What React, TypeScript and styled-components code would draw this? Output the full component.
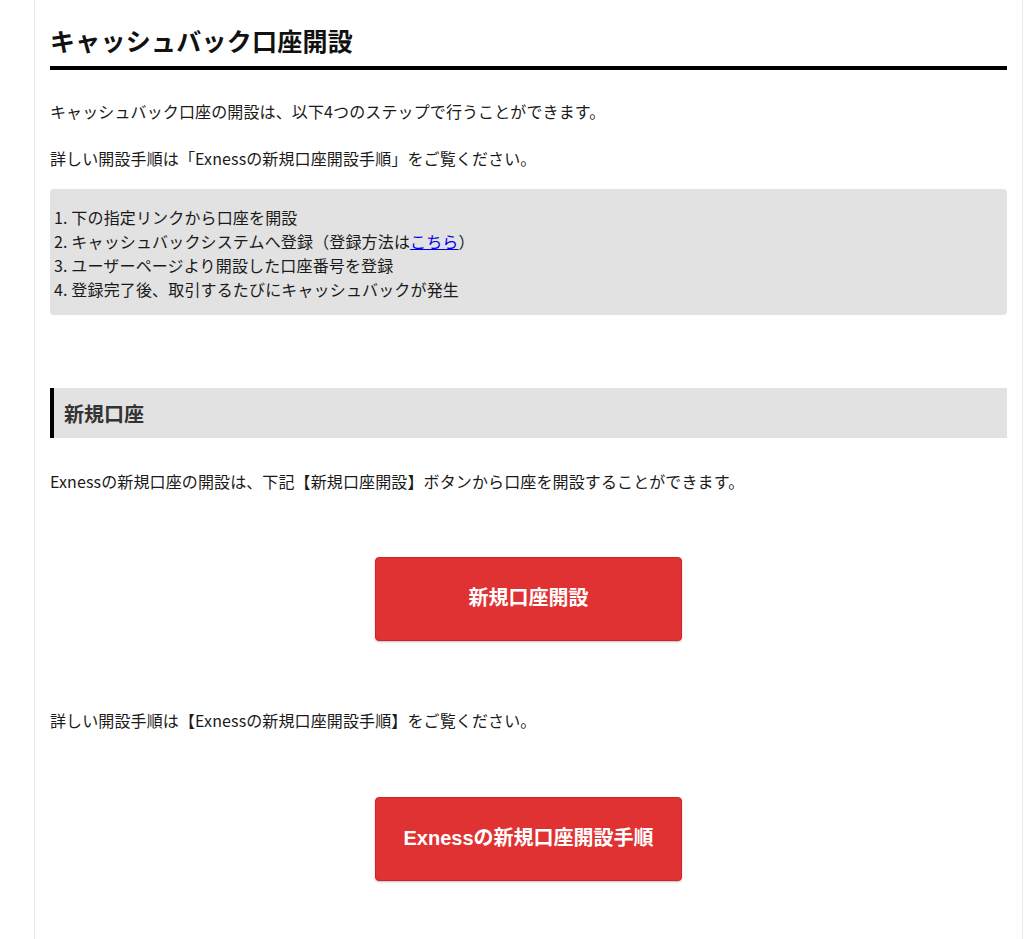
import React from 'react';
import styled, { createGlobalStyle } from 'styled-components';

const GlobalStyle = createGlobalStyle`
  body {
    margin: 0;
    background: #fff;
    font-family: "Noto Sans CJK JP", "Noto Sans", sans-serif;
    color: #1a1a1a;
  }
`;

// 記事本文のカード
const Article = styled.article`
  box-sizing: border-box;
  margin-left: 34px;
  width: 989px;
  min-height: 939px;
  padding: 22px 15px 40px;
  border-left: 1px solid #ebebeb;
  border-right: 1px solid #ebebeb;
`;

const Title = styled.h2`
  margin: 0;
  font-size: 25px;
  font-weight: 700;
  letter-spacing: 0.25px;
  line-height: 36px;
  padding-bottom: 8px;
  border-bottom: 4px solid #000;
  color: #111;
`;

const Para = styled.p<{ $top: number }>`
  margin: ${p => p.$top}px 0 0;
  font-size: 16px;
  letter-spacing: 0.12px;
  line-height: 28px;
`;

const StepBox = styled.div`
  margin-top: 17px;
  padding: 16px 3px 14px 4px;
  background: #e2e2e2;
  border-radius: 4px;
  font-size: 16px;
  letter-spacing: 0.15px;
  line-height: 24px;

  a {
    color: #0000ee;
    text-decoration: underline;
  }
`;

const SubHeading = styled.h3`
  margin: 73px 0 0;
  height: 50px;
  display: flex;
  align-items: center;
  padding-left: 10px;
  background: #e2e2e2;
  border-left: 4px solid #000;
  font-size: 20px;
  font-weight: 700;
  color: #333;
`;

const ButtonRow = styled.div<{ $top: number }>`
  display: flex;
  justify-content: center;
  margin-top: ${p => p.$top}px;
`;

const RedButton = styled.a`
  box-sizing: border-box;
  width: 307px;
  height: 84px;
  padding-bottom: 5px;
  display: flex;
  align-items: center;
  justify-content: center;
  background: #e03233;
  border: 1px solid #d2232a;
  border-radius: 4px;
  box-shadow: 0 1px 2px rgba(0, 0, 0, 0.25);
  color: #fff;
  font-family: "Liberation Sans", "Noto Sans CJK JP", sans-serif;
  font-size: 20px;
  font-weight: 700;
  text-decoration: none;
  cursor: pointer;
`;

const steps = [
  '1. 下の指定リンクから口座を開設',
  null,
  '3. ユーザーページより開設した口座番号を登録',
  '4. 登録完了後、取引するたびにキャッシュバックが発生',
];

export default function App() {
  return (
    <>
      <GlobalStyle />
      <Article>
        <Title>キャッシュバック口座開設</Title>
        <Para $top={27}>キャッシュバック口座の開設は、以下4つのステップで行うことができます。</Para>
        <Para $top={19}>詳しい開設手順は「Exnessの新規口座開設手順」をご覧ください。</Para>

        <StepBox>
          {steps.map((s, i) =>
            s ? (
              <div key={i}>{s}</div>
            ) : (
              <div key={i}>
                2. キャッシュバックシステムへ登録（登録方法は<a href="#">こちら</a>）
              </div>
            )
          )}
        </StepBox>

        <SubHeading>新規口座</SubHeading>
        <Para $top={29}>
          Exnessの新規口座の開設は、下記【新規口座開設】ボタンから口座を開設することができます。
        </Para>

        <ButtonRow $top={62}>
          <RedButton href="#">新規口座開設</RedButton>
        </ButtonRow>

        <Para $top={65}>詳しい開設手順は【Exnessの新規口座開設手順】をご覧ください。</Para>

        <ButtonRow $top={63}>
          <RedButton href="#">Exnessの新規口座開設手順</RedButton>
        </ButtonRow>
      </Article>
    </>
  );
}
